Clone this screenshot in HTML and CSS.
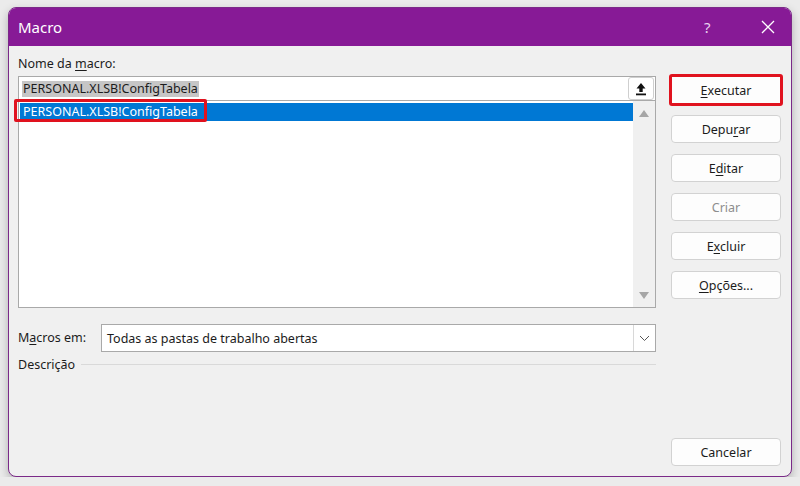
FILE: index.html
```html
<!DOCTYPE html>
<html lang="pt">
<head>
  <meta charset="UTF-8">
  <title>Macro</title>
  <link rel="stylesheet" href="styles.css">
</head>
<body>
  <div class="dialog">
    <!-- Title bar -->
    <div class="titlebar">
      <span class="title">Macro</span>
      <span class="help">?</span>
      <span class="close">
        <svg width="14" height="14" viewBox="0 0 14 14"><path d="M1 1L13 13M13 1L1 13" stroke="#fff" stroke-width="1.3" fill="none"/></svg>
      </span>
    </div>

    <div class="content">
      <!-- Left side -->
      <div class="left">
        <div class="label">Nome da <u>m</u>acro:</div>
        <div class="name-input">
          <span class="name-text">PERSONAL.XLSB!ConfigTabela</span>
          <span class="collapse-btn">
            <svg width="12" height="14" viewBox="0 0 12 14"><path d="M6 1L1.5 6.5H4.3V10H7.7V6.5H10.5Z" fill="#111"/><rect x="1" y="11.5" width="10" height="1.8" fill="#111"/></svg>
          </span>
        </div>
        <div class="macro-list">
          <div class="list-items">
            <div class="list-item selected">PERSONAL.XLSB!ConfigTabela</div>
          </div>
          <div class="scrollbar">
            <svg width="10" height="7" viewBox="0 0 10 7"><path d="M5 0L10 7H0Z" fill="#a6a6a6"/></svg>
            <svg width="10" height="7" viewBox="0 0 10 7"><path d="M0 0H10L5 7Z" fill="#a6a6a6"/></svg>
          </div>
          <div class="highlight-box"></div>
        </div>

        <div class="macros-in">
          <span class="label">M<u>a</u>cros em:</span>
          <div class="select">
            <span class="select-text">Todas as pastas de trabalho abertas</span>
            <span class="select-btn">
              <svg width="11" height="7" viewBox="0 0 11 7"><path d="M1 1L5.5 5.5L10 1" stroke="#555" stroke-width="1" fill="none"/></svg>
            </span>
          </div>
        </div>

        <div class="description">
          <span>Descrição</span>
          <span class="rule"></span>
        </div>
      </div>

      <!-- Right side buttons -->
      <div class="right">
        <button class="btn btn-run"><u>E</u>xecutar</button>
        <button class="btn">Depu<u>r</u>ar</button>
        <button class="btn">E<u>d</u>itar</button>
        <button class="btn" disabled>Criar</button>
        <button class="btn">E<u>x</u>cluir</button>
        <button class="btn"><u>O</u>pções...</button>
        <button class="btn btn-cancel">Cancelar</button>
      </div>
    </div>
  </div>
</body>
</html>
```

FILE: styles.css
```css
/* General */
body {
  margin: 0;
  padding: 7px 8px 0;
  background: #ebebeb;
  font-family: 'Noto Sans', 'Open Sans', sans-serif;
  font-size: 12.5px;
  color: #1b1b1b;
}

u {
  text-decoration-thickness: 1px;
  text-underline-offset: 2px;
}

.dialog {
  width: 782px;
  height: 468px;
  border: 1px solid #7b2a88;
  border-radius: 8px;
  background: #f0f0f0;
  overflow: hidden;
  box-shadow: 0 4px 10px rgba(0, 0, 0, 0.25);
  display: flex;
  flex-direction: column;
}

/* Title bar */
.titlebar {
  height: 38px;
  background: #871a96;
  color: #fff;
  display: flex;
  align-items: center;
  padding-left: 9px;
  flex-shrink: 0;
}

.title {
  font-size: 15px;
  flex: 1;
}

.help {
  font-size: 15px;
  color: #e9d3ee;
  width: 57px;
}

.close {
  width: 30px;
  display: flex;
}

/* Content */
.content {
  flex: 1;
  display: flex;
  padding: 0 10px 10px 9px;
  gap: 15px;
}

.left {
  width: 638px;
  display: flex;
  flex-direction: column;
}

.label {
  line-height: 18px;
  margin-top: 9px;
}

.name-input {
  margin-top: 3px;
  height: 23px;
  background: #fff;
  border: 1px solid #a9a9a9;
  display: flex;
  align-items: center;
  justify-content: space-between;
  padding: 0 1px 0 3px;
}

.name-text {
  background: #c6c6c6;
  line-height: 16px;
  padding: 0 1px;
}

.collapse-btn {
  width: 24px;
  height: 21px;
  border: 1px solid #cfcfcf;
  border-radius: 3px;
  display: flex;
  align-items: center;
  justify-content: center;
}

.macro-list {
  position: relative;
  height: 206px;
  background: #fff;
  border: 1px solid #a9a9a9;
  border-top: none;
  display: flex;
}

.list-items {
  flex: 1;
  padding: 2px 0 0 1px;
}

.list-item {
  height: 18px;
  line-height: 18px;
  padding-left: 3px;
}

.list-item.selected {
  background: #0078d4;
  color: #fff;
}

.scrollbar {
  width: 22px;
  background: #f0f0f0;
  display: flex;
  flex-direction: column;
  justify-content: space-between;
  align-items: center;
  padding: 9px 0 8px;
}

.highlight-box {
  position: absolute;
  left: -5px;
  top: -2px;
  width: 187px;
  height: 17px;
  border: 3px solid #e0121e;
  border-radius: 2px;
}

/* Macros em */
.macros-in {
  margin-top: 16px;
  display: flex;
  align-items: center;
}

.macros-in .label {
  margin: 0;
  width: 83px;
}

.select {
  flex: 1;
  height: 26px;
  background: #fff;
  border: 1px solid #a9a9a9;
  display: flex;
  align-items: center;
  justify-content: space-between;
}

.select-text {
  padding-left: 5px;
}

.select-btn {
  width: 21px;
  height: 26px;
  border-left: 1px solid #d8d8d8;
  display: flex;
  align-items: center;
  justify-content: center;
}

.description {
  margin-top: 4px;
  display: flex;
  align-items: center;
  gap: 6px;
}

.description .rule {
  flex: 1;
  height: 1px;
  background: #d9d9d9;
}

/* Buttons */
.right {
  width: 110px;
  display: flex;
  flex-direction: column;
  gap: 11px;
  padding-top: 30px;
}

.btn {
  height: 28px;
  background: #fdfdfd;
  border: 1px solid #d2d2d2;
  border-radius: 4px;
  font-family: inherit;
  font-size: 12.5px;
  color: #1b1b1b;
  padding: 0;
}

.btn:disabled {
  color: #8d8d8d;
}

.btn-run {
  border-radius: 1px;
  outline: 3px solid #e0121e;
  outline-offset: -1px;
}

.btn-cancel {
  margin-top: auto;
}
```
